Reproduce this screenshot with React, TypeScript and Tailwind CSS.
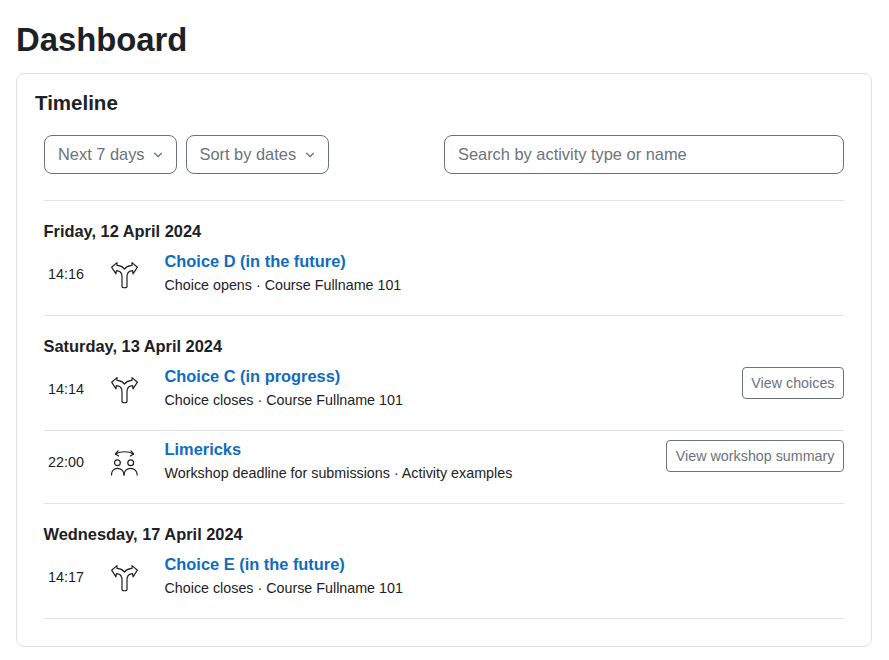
import { ChevronDown } from 'lucide-react';

const ChoiceIcon = () => (
  <svg width="28" height="28" viewBox="0 0 28 28" fill="none" stroke="#1d2125" strokeWidth="1.2" strokeLinejoin="round" strokeLinecap="round">
    <path d="M11 25.4C11 27.2 16 27.2 16 25.4V15.5C16 12.4 17.4 10.4 20.2 9.8L21.6 9.6L22 12.8L26.4 6.2L21 1.6L21 4.4L19.4 4.6C16.8 5 14.7 6 13.5 8.2C12.3 6 10.2 5 7.6 4.6L6 4.4V1.6L0.6 6.2L5 12.8L5.4 9.6L6.8 9.8C9.6 10.4 11 12.4 11 15.5V25.4Z" />
  </svg>
);

const WorkshopIcon = () => (
  <svg width="28" height="28" viewBox="0 0 28 28" fill="none" stroke="#1d2125" strokeWidth="1.2" strokeLinecap="round" strokeLinejoin="round">
    <path d="M4.5 5C9.5 2 17.5 2 22.5 5" />
    <path d="M7 1.8L4.4 5L7.6 7" />
    <path d="M20 1.8L22.6 5L19.4 7" />
    <circle cx="6.4" cy="13.7" r="2.9" />
    <circle cx="19.7" cy="13.7" r="2.9" />
    <path d="M0.5 26C0.5 22 3 19.3 6.4 19.3C10 19.3 13 22 13 26" />
    <path d="M13 26C13 22 16 19.3 19.7 19.3C23.2 19.3 26.2 22 26.2 26" />
  </svg>
);

interface EventRowProps {
  time: string;
  icon: React.ReactNode;
  title: string;
  meta: string;
  action?: string;
  last?: boolean;
}

function EventRow({ time, icon, title, meta, action, last }: EventRowProps) {
  return (
    <div className={`flex items-start pt-[6px] ${last ? 'h-[72px]' : 'h-[73px] border-b border-[#dee2e6]'}`}>
      <span className="w-[60px] pl-1 mt-[15px] text-[14.35px] leading-[20px] text-[#1d2125]">{time}</span>
      <span className="w-[60.5px] pl-[7px] mt-[12px]">{icon}</span>
      <div className="flex-1 min-w-0">
        <div className="text-[16.4px] leading-[24px] font-bold text-[#0f6cbf]">{title}</div>
        <div className="text-[14.3px] leading-[24px] text-[#1d2125]">{meta}</div>
      </div>
      {action && (
        <button className="mt-[3px] h-[32px] w-fit px-[8.5px] pt-[1px] rounded-[4px] border border-[#6a737b] text-[14.3px] text-[#6a737b] bg-white">
          {action}
        </button>
      )}
    </div>
  );
}

function DateGroup({ date, children }: { date: string; children: React.ReactNode }) {
  return (
    <section className="border-b border-[#dee2e6]">
      <h5 className="pt-[20px] h-[42px] -ml-[0.5px] text-[16.4px] leading-[21px] font-bold text-[#1d2125]">{date}</h5>
      {children}
    </section>
  );
}

export default function App() {
  return (
    <div className="bg-white min-h-[660px] pl-4 pr-[17px] pt-[16px] font-['Liberation_Sans',Arial,sans-serif]">
      <h1 className="text-[32.8px] leading-[48px] font-bold text-[#1d2125] mb-[9px]">Dashboard</h1>

      <div className="h-[574px] rounded-[8px] border border-[#dee2e6] bg-white pt-[17px] pl-[18px] pr-[27px]">
        <h2 className="text-[20.5px] leading-[24px] font-bold text-[#1d2125]">Timeline</h2>

        <div className="ml-[9px]">
          <div className="flex items-center mt-[20px] pb-[26px] border-b border-[#dee2e6]">
            <button className="h-[39px] w-[133px] flex items-center gap-[6.5px] pl-[13px] rounded-[8px] border border-[#6a737b] text-[16.4px] text-[#6a737b]">
              Next 7 days
              <ChevronDown size={14} strokeWidth={2} />
            </button>
            <button className="ml-[9px] h-[39px] w-[143px] flex items-center gap-[6.5px] pl-[12.5px] rounded-[8px] border border-[#6a737b] text-[16.4px] text-[#6a737b]">
              Sort by dates
              <ChevronDown size={14} strokeWidth={2} />
            </button>
            <input
              placeholder="Search by activity type or name"
              className="ml-auto h-[39px] w-[400px] px-[13px] rounded-[8px] border border-[#6a737b] text-[16.4px] bg-white outline-none placeholder:text-[#6a737b]"
            />
          </div>

          <DateGroup date="Friday, 12 April 2024">
            <EventRow time="14:16" icon={<ChoiceIcon />} title="Choice D (in the future)" meta="Choice opens · Course Fullname 101" last />
          </DateGroup>

          <DateGroup date="Saturday, 13 April 2024">
            <EventRow time="14:14" icon={<ChoiceIcon />} title="Choice C (in progress)" meta="Choice closes · Course Fullname 101" action="View choices" />
            <EventRow time="22:00" icon={<WorkshopIcon />} title="Limericks" meta="Workshop deadline for submissions · Activity examples" action="View workshop summary" last />
          </DateGroup>

          <DateGroup date="Wednesday, 17 April 2024">
            <EventRow time="14:17" icon={<ChoiceIcon />} title="Choice E (in the future)" meta="Choice closes · Course Fullname 101" last />
          </DateGroup>
        </div>
      </div>
    </div>
  );
}
